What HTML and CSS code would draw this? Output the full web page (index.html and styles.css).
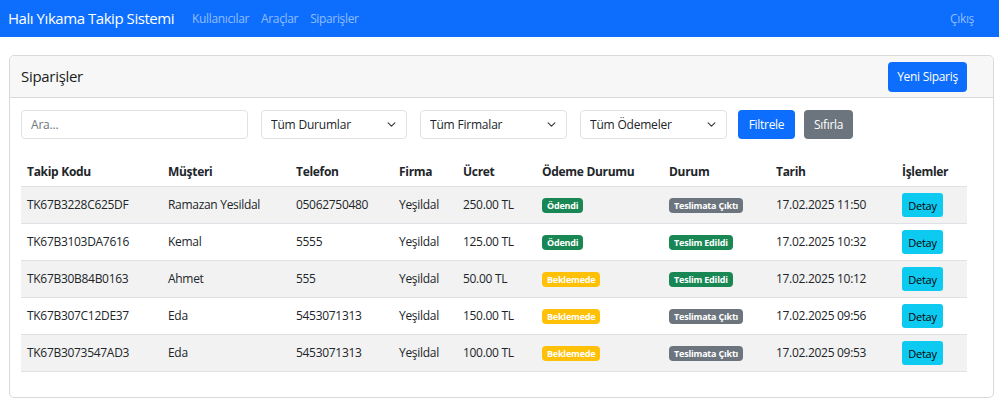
FILE: index.html
```html
<!DOCTYPE html>
<html lang="tr">
<head>
    <meta charset="UTF-8">
    <meta name="viewport" content="width=device-width, initial-scale=1.0">
    <title>Siparişler</title>
    <link rel="stylesheet" href="styles.css">
</head>
<body>

<nav class="navbar">
    <a class="brand" href="#">Halı Yıkama Takip Sistemi</a>
    <ul class="nav-links">
        <li><a href="#">Kullanıcılar</a></li>
        <li><a href="#">Araçlar</a></li>
        <li><a href="#">Siparişler</a></li>
    </ul>
    <a class="logout" href="#">Çıkış</a>
</nav>

<div class="container">
    <div class="card">
        <div class="card-header">
            <h5>Siparişler</h5>
            <button class="btn btn-primary">Yeni Sipariş</button>
        </div>
        <div class="card-body">
            <!-- Filters -->
            <form class="filters">
                <input type="text" class="field search" placeholder="Ara...">
                <select class="field select first">
                    <option>Tüm Durumlar</option>
                </select>
                <select class="field select">
                    <option>Tüm Firmalar</option>
                </select>
                <select class="field select">
                    <option>Tüm Ödemeler</option>
                </select>
                <button type="button" class="btn btn-primary">Filtrele</button>
                <button type="button" class="btn btn-secondary">Sıfırla</button>
            </form>

            <table class="orders">
                <thead>
                    <tr>
                        <th class="c-code">Takip Kodu</th>
                        <th class="c-customer">Müşteri</th>
                        <th class="c-phone">Telefon</th>
                        <th class="c-firm">Firma</th>
                        <th class="c-price">Ücret</th>
                        <th class="c-pay">Ödeme Durumu</th>
                        <th class="c-status">Durum</th>
                        <th class="c-date">Tarih</th>
                        <th class="c-actions">İşlemler</th>
                    </tr>
                </thead>
                <tbody>
                    <tr>
                        <td>TK67B3228C625DF</td>
                        <td>Ramazan Yesildal</td>
                        <td>05062750480</td>
                        <td>Yeşildal</td>
                        <td>250.00 TL</td>
                        <td><span class="badge bg-success">Ödendi</span></td>
                        <td><span class="badge bg-secondary">Teslimata Çıktı</span></td>
                        <td>17.02.2025 11:50</td>
                        <td><button class="btn-detail">Detay</button></td>
                    </tr>
                    <tr>
                        <td>TK67B3103DA7616</td>
                        <td>Kemal</td>
                        <td>5555</td>
                        <td>Yeşildal</td>
                        <td>125.00 TL</td>
                        <td><span class="badge bg-success">Ödendi</span></td>
                        <td><span class="badge bg-success">Teslim Edildi</span></td>
                        <td>17.02.2025 10:32</td>
                        <td><button class="btn-detail">Detay</button></td>
                    </tr>
                    <tr>
                        <td>TK67B30B84B0163</td>
                        <td>Ahmet</td>
                        <td>555</td>
                        <td>Yeşildal</td>
                        <td>50.00 TL</td>
                        <td><span class="badge bg-warning">Beklemede</span></td>
                        <td><span class="badge bg-success">Teslim Edildi</span></td>
                        <td>17.02.2025 10:12</td>
                        <td><button class="btn-detail">Detay</button></td>
                    </tr>
                    <tr>
                        <td>TK67B307C12DE37</td>
                        <td>Eda</td>
                        <td>5453071313</td>
                        <td>Yeşildal</td>
                        <td>150.00 TL</td>
                        <td><span class="badge bg-warning">Beklemede</span></td>
                        <td><span class="badge bg-secondary">Teslimata Çıktı</span></td>
                        <td>17.02.2025 09:56</td>
                        <td><button class="btn-detail">Detay</button></td>
                    </tr>
                    <tr>
                        <td>TK67B3073547AD3</td>
                        <td>Eda</td>
                        <td>5453071313</td>
                        <td>Yeşildal</td>
                        <td>100.00 TL</td>
                        <td><span class="badge bg-warning">Beklemede</span></td>
                        <td><span class="badge bg-secondary">Teslimata Çıktı</span></td>
                        <td>17.02.2025 09:53</td>
                        <td><button class="btn-detail">Detay</button></td>
                    </tr>
                </tbody>
            </table>
        </div>
    </div>
</div>

</body>
</html>
```

FILE: styles.css
```css
/* Global styles */
body {
    margin: 0;
    padding: 0;
    font-family: 'Open Sans', 'Noto Sans', sans-serif;
    font-size: 12px;
    line-height: 1.5;
    color: #212529;
    background: #ffffff;
}

a {
    text-decoration: none;
}

/* Navbar */
.navbar {
    height: 37px;
    background: #0d6efd;
    display: flex;
    align-items: center;
    padding: 0 25px 0 8px;
}

.brand {
    color: #ffffff;
    font-size: 15px;
    margin-right: 12px;
    letter-spacing: -0.45px;
}

.nav-links {
    list-style: none;
    margin: 0;
    padding: 0;
    display: flex;
    flex: 1;
}

.nav-links a,
.logout {
    display: block;
    padding: 0 6px;
    color: rgba(255, 255, 255, 0.55);
    font-size: 12px;
    letter-spacing: -0.35px;
}

.logout {
    padding-right: 0;
}

/* Card */
.container {
    padding: 18px 5px 0 9px;
}

.card {
    border: 1px solid #d9d9d9;
    border-radius: 5px;
    height: 341px;
}

.card-header {
    background: #f7f7f7;
    border-bottom: 1px solid #d9d9d9;
    border-radius: 5px 5px 0 0;
    height: 41px;
    display: flex;
    align-items: center;
    justify-content: space-between;
    padding: 0 26px 0 11px;
}

.card-header h5 {
    margin: 0;
    font-size: 15px;
    font-weight: 500;
    color: #1a1d20;
    letter-spacing: -0.3px;
}

.card-body {
    padding: 12px 26px 0 11px;
}

/* Buttons */
.btn {
    border: none;
    border-radius: 4px;
    color: #ffffff;
    font-family: inherit;
    font-size: 12px;
    height: 29px;
    padding: 0 9px;
    cursor: pointer;
    letter-spacing: -0.3px;
}

.card-header .btn {
    height: 30px;
    width: 79px;
    padding: 0;
}

.btn-primary {
    background: #0d6efd;
}

.btn-secondary {
    background: #6c757d;
}

/* Filters */
.filters {
    display: flex;
    align-items: center;
    margin-bottom: 18px;
}

.field {
    box-sizing: border-box;
    height: 29px;
    border: 1px solid #dee2e6;
    border-radius: 4px;
    background-color: #ffffff;
    font-family: inherit;
    font-size: 12px;
    color: #212529;
    padding: 0 9px;
    margin-right: 13px;
    letter-spacing: -0.2px;
}

.field::placeholder {
    color: #6c757d;
}

.search {
    width: 227px;
}

.select {
    width: 147px;
    appearance: none;
    -webkit-appearance: none;
    background-image: url("data:image/svg+xml,%3csvg xmlns='http://www.w3.org/2000/svg' viewBox='0 0 16 16'%3e%3cpath fill='none' stroke='%23343a40' stroke-linecap='round' stroke-linejoin='round' stroke-width='2' d='m2 5 6 6 6-6'/%3e%3c/svg%3e");
    background-repeat: no-repeat;
    background-position: right 9px center;
    background-size: 11px 9px;
}

.select.first {
    width: 146px;
}

.filters .select:last-of-type {
    margin-right: 11px;
}

.filters .btn-primary {
    margin-right: 9px;
    width: 57px;
}

.filters .btn-secondary {
    width: 49px;
}

/* Table */
.orders {
    width: 946px;
    border-collapse: collapse;
    table-layout: fixed;
}

.orders th,
.orders td {
    text-align: left;
    padding: 0 6px;
    white-space: nowrap;
    border-bottom: 1px solid #dee2e6;
    letter-spacing: -0.3px;
}

.orders th {
    height: 28px;
    font-weight: 700;
    padding-top: 1px;
}

.orders td {
    height: 36px;
}

.orders tbody tr:nth-child(odd) td {
    background: #f2f2f2;
}

.c-code { width: 129px; }
.c-customer { width: 116px; }
.c-phone { width: 91px; }
.c-firm { width: 52px; }
.c-price { width: 67px; }
.c-pay { width: 115px; }
.c-status { width: 95px; }
.c-date { width: 114px; }
.c-actions { width: 59px; }

.badge {
    display: inline-block;
    color: #ffffff;
    font-size: 9px;
    font-weight: 700;
    line-height: 1;
    padding: 3px 5px;
    border-radius: 4px;
    letter-spacing: -0.2px;
}

.bg-success {
    background: #198754;
}

.bg-secondary {
    background: #6c757d;
}

.bg-warning {
    background: #ffc107;
}

.btn-detail {
    background: #0dcaf0;
    border: none;
    border-radius: 3px;
    color: #000000;
    font-family: inherit;
    font-size: 11px;
    height: 24px;
    width: 41px;
    padding: 0;
    cursor: pointer;
    letter-spacing: -0.2px;
}
```
